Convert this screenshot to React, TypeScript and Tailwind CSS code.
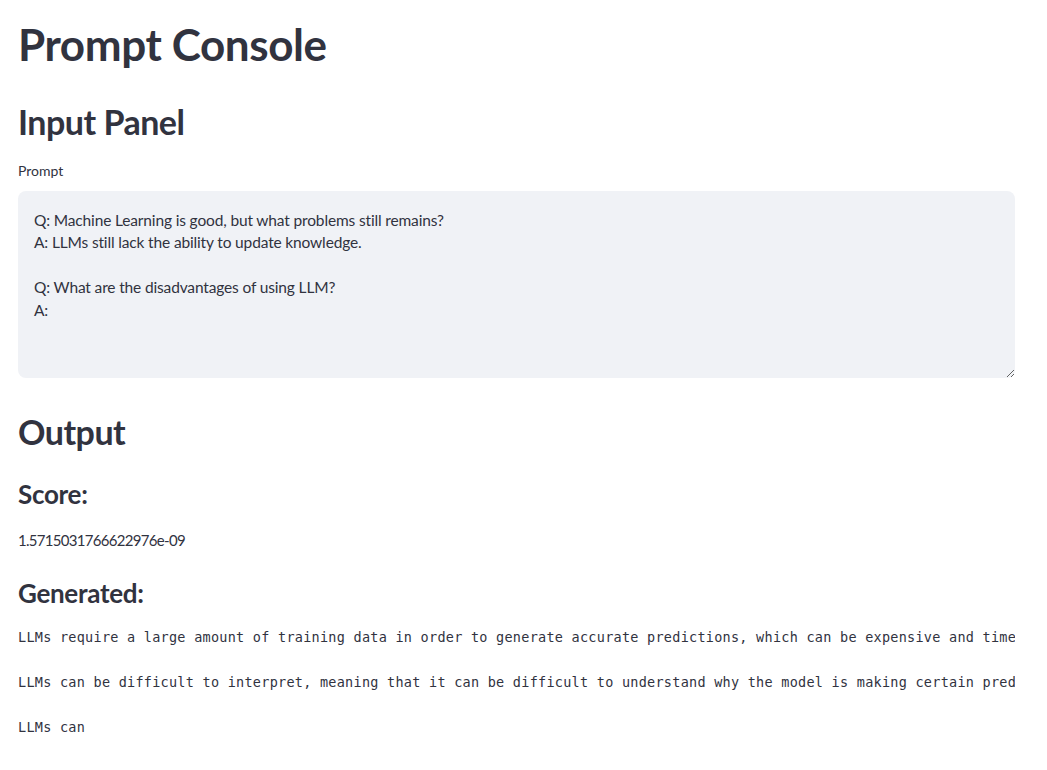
import React from "react";

const sans = { fontFamily: "Lato, 'Noto Sans', sans-serif" } as const;

export default function App() {
  const prompt =
    "Q: Machine Learning is good, but what problems still remains?\nA: LLMs still lack the ability to update knowledge.\n\nQ: What are the disadvantages of using LLM?\nA:";
  const generated =
    "LLMs require a large amount of training data in order to generate accurate predictions, which can be expensive and time-consuming to acquire.\n\nLLMs can be difficult to interpret, meaning that it can be difficult to understand why the model is making certain predictions.\n\nLLMs can";
  return (
    <div className="min-h-[770px] w-full bg-white text-[#31333f]" style={sans}>
      <div className="ml-[18px] flex w-[997px] flex-col">
        <h1 className="mt-[16px] text-[44px] font-bold leading-[56px] tracking-[-0.4px]">Prompt Console</h1>
        <h2 className="mt-[28px] text-[34px] font-bold leading-[44px] tracking-[-0.5px]">Input Panel</h2>
        <label className="mt-[17px] text-[14px] leading-[20px]">Prompt</label>
        <textarea
          className="mt-[10px] h-[187px] w-full resize-y rounded-[8px] bg-[#f0f2f6] px-[16px] pt-[18px] pb-[14px] text-[15.5px] leading-[22.4px] tracking-[-0.15px] text-[#31333f] outline-none"
          style={sans}
          defaultValue={prompt}
        />
        <h2 className="mt-[32px] text-[34px] font-bold leading-[44px] tracking-[-0.5px]">Output</h2>
        <h3 className="mt-[22px] text-[26px] font-bold leading-[36px] tracking-[-0.3px]">Score:</h3>
        <p className="mt-[16px] text-[15px] leading-[24px] tracking-[-0.7px]">1.5715031766622976e-09</p>
        <h3 className="mt-[23px] text-[26px] font-bold leading-[36px] tracking-[-0.3px]">Generated:</h3>
        <pre
          className="mt-[15px] overflow-hidden whitespace-pre text-[13.5px] leading-[22.5px] tracking-[0.26px] text-[#31333f]"
          style={{ fontFamily: "'DejaVu Sans Mono', 'Liberation Mono', monospace" }}
        >
          {generated}
        </pre>
      </div>
    </div>
  );
}
